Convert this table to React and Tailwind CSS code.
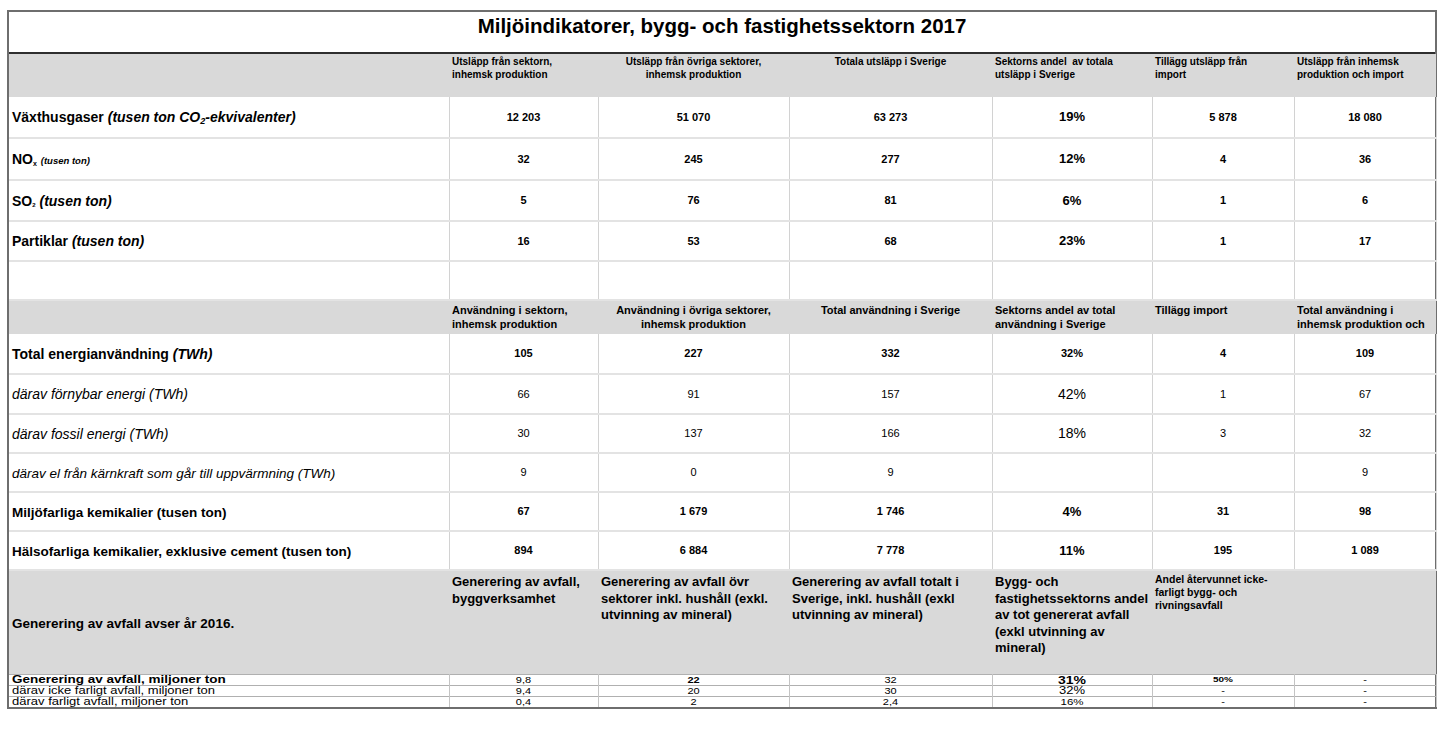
import React from 'react';

const ARIAL = { fontFamily: '"Liberation Sans", Arial, sans-serif' };

const widths = [440, 149, 191, 203, 160, 142, 142];

const Label = ({ children, h, className = "" }) => (
  <td className={`border-r border-[#d2d2d2] border-b-2 border-b-[#e3e3e3] pl-[3px] align-middle whitespace-nowrap ${className}`} style={{ height: h }}>
    {children}
  </td>
);

const Val = ({ children, className = "" }) => (
  <td className={`border-r border-[#d2d2d2] border-b-2 border-b-[#e3e3e3] text-center align-middle ${className}`}>
    {children}
  </td>
);

const Head = ({ children, center, className = "" }) => (
  <td className={`align-top px-[3px] whitespace-nowrap ${center ? 'text-center' : 'text-left'} ${className}`}>
    {children}
  </td>
);

const emis = [
  {
    label: <><b className="text-[14px]">Växthusgaser </b><b className="italic text-[14px]">(tusen ton CO<sub className="text-[9px]">2</sub>-ekvivalenter)</b></>,
    vals: ['12 203', '51 070', '63 273', '19%', '5 878', '18 080'], h: 41,
  },
  {
    label: <><b className="text-[14px]">NO<sub className="text-[7px]">x</sub> </b><b className="italic text-[9.5px]">(tusen ton)</b></>,
    vals: ['32', '245', '277', '12%', '4', '36'], h: 42,
  },
  {
    label: <><b className="text-[14px]">SO<sub className="text-[6px]">2</sub> </b><b className="italic text-[14px]">(tusen ton)</b></>,
    vals: ['5', '76', '81', '6%', '1', '6'], h: 41,
  },
  {
    label: <><b className="text-[14px]">Partiklar </b><b className="italic text-[14px]">(tusen ton)</b></>,
    vals: ['16', '53', '68', '23%', '1', '17'], h: 40,
  },
];

const energy = [
  { label: <span className="font-bold text-[14px]">Total energianvändning <i>(TWh)</i></span>, vals: ['105', '227', '332', '32%', '4', '109'], bold: true, h: 40 },
  { label: <span className="italic text-[14px]">därav förnybar energi (TWh)</span>, vals: ['66', '91', '157', '42%', '1', '67'], h: 40 },
  { label: <span className="italic text-[14px]">därav fossil energi (TWh)</span>, vals: ['30', '137', '166', '18%', '3', '32'], h: 39 },
  { label: <span className="italic text-[13.5px]">därav el från kärnkraft som går till uppvärmning (TWh)</span>, vals: ['9', '0', '9', '', '', '9'], h: 39 },
];

const chem = [
  { label: 'Miljöfarliga kemikalier (tusen ton)', vals: ['67', '1 679', '1 746', '4%', '31', '98'], h: 39 },
  { label: 'Hälsofarliga kemikalier, exklusive cement (tusen ton)', vals: ['894', '6 884', '7 778', '11%', '195', '1 089'], h: 39 },
];

const waste = [
  { label: 'Generering av avfall, miljoner ton', vals: ['9,8', '22', '32', '31%', '50%', '-'], bold: true },
  { label: 'därav icke farligt avfall,  miljoner ton', vals: ['9,4', '20', '30', '32%', '-', '-'] },
  { label: 'därav farligt avfall,  miljoner ton', vals: ['0,4', '2', '2,4', '16%', '-', '-'] },
];

const wasteCls = (r, j) => {
  if (j === 3) return r.bold ? 'font-bold text-[14px]' : r.label.startsWith('därav icke') ? 'text-[13px]' : 'text-[11.5px]';
  if (j === 4 && r.bold) return 'font-bold text-[10px]';
  if (j === 1 && r.bold) return 'font-bold text-[11px]';
  return 'text-[11px]';
};

export default function App() {
  return (
    <div className="bg-white w-[1442px] h-[739px] pt-[10px] pl-[7px]" style={ARIAL}>
      <div className="w-[1430px] border-2 border-[#6e6e6e] text-black">
        <div className="h-[42px] flex items-start justify-center border-b-2 border-b-[#2e2e2e]">
          <h1 className="font-bold text-[20.5px] leading-[26px] mt-[1px]">Miljöindikatorer, bygg- och fastighetssektorn 2017</h1>
        </div>
        <table className="table-fixed border-collapse w-[1426px]">
          <colgroup>
            {widths.map((w, i) => <col key={i} style={{ width: w }} />)}
          </colgroup>
          <tbody>
            <tr className="bg-[#d9d9d9] h-[43px] font-bold text-[10px] leading-[13px]">
              <td />
              <Head className="pt-[1px]">Utsläpp från sektorn,<br />inhemsk produktion</Head>
              <Head center className="pt-[1px]">Utsläpp från övriga sektorer,<br />inhemsk produktion</Head>
              <Head center className="pt-[1px]">Totala utsläpp i Sverige</Head>
              <Head className="pt-[1px]">Sektorns andel&nbsp; av totala<br />utsläpp i Sverige</Head>
              <Head className="pt-[1px]">Tillägg utsläpp från<br />import</Head>
              <Head className="pt-[1px]">Utsläpp från inhemsk<br />produktion och import</Head>
            </tr>
            {emis.map((r, i) => (
              <tr key={i}>
                <Label h={r.h}>{r.label}</Label>
                {r.vals.map((v, j) => (
                  <Val key={j} className={j === 3 ? 'font-bold text-[13px]' : 'font-bold text-[11px]'}>{v}</Val>
                ))}
              </tr>
            ))}
            <tr>
              <Label h={39} />
              {[0, 1, 2, 3, 4, 5].map(j => <Val key={j} />)}
            </tr>
            <tr className="bg-[#d9d9d9] h-[33px] font-bold text-[11px] leading-[14px]">
              <td />
              <Head className="pt-[2px]">Användning i sektorn,<br />inhemsk produktion</Head>
              <Head center className="pt-[2px]">Användning i övriga sektorer,<br />inhemsk produktion</Head>
              <Head center className="pt-[2px]">Total användning i Sverige</Head>
              <Head className="pt-[2px]">Sektorns andel av total<br />användning i Sverige</Head>
              <Head className="pt-[2px]">Tillägg import</Head>
              <td className="align-top pt-[2px] px-[3px]">
                <div className="h-[31px] overflow-hidden whitespace-nowrap">Total användning i<br />inhemsk produktion och<br />import</div>
              </td>
            </tr>
            {energy.map((r, i) => (
              <tr key={i}>
                <Label h={r.h}>{r.label}</Label>
                {r.vals.map((v, j) => (
                  <Val key={j} className={`${r.bold ? 'font-bold' : ''} ${j === 3 && !r.bold ? 'text-[14px]' : 'text-[11px]'}`}>
                    {v}
                  </Val>
                ))}
              </tr>
            ))}
            {chem.map((r, i) => (
              <tr key={i}>
                <Label h={r.h}><b className="text-[13.5px]">{r.label}</b></Label>
                {r.vals.map((v, j) => (
                  <Val key={j} className={j === 3 ? 'font-bold text-[13px]' : 'font-bold text-[11px]'}>{v}</Val>
                ))}
              </tr>
            ))}
            <tr className="bg-[#d9d9d9] h-[104px] font-bold text-[13px] leading-[16.5px]">
              <td className="pl-[3px] align-middle pt-[4px] text-[13.5px]">Generering av avfall avser år 2016.</td>
              <td className="align-top pt-[3px] px-[3px] whitespace-nowrap">Generering av avfall,<br />byggverksamhet</td>
              <td className="align-top pt-[3px] px-[3px] whitespace-nowrap">Generering av avfall övr<br />sektorer inkl. hushåll (exkl.<br />utvinning av mineral)</td>
              <td className="align-top pt-[3px] px-[3px] whitespace-nowrap">Generering av avfall totalt i<br />Sverige, inkl. hushåll (exkl<br />utvinning av mineral)</td>
              <td className="align-top pt-[3px] px-[3px] whitespace-nowrap">Bygg- och<br />fastighetssektorns andel<br />av tot genererat avfall<br />(exkl utvinning av<br />mineral)</td>
              <td className="align-top pt-[2px] px-[3px] leading-[13px] text-[10.5px] whitespace-nowrap">Andel återvunnet icke-<br />farligt bygg- och<br />rivningsavfall</td>
              <td />
            </tr>
            {waste.map((r, i) => (
              <tr key={i}>
                <td className={`h-[11px] p-0 pl-[3px] leading-[10px] whitespace-nowrap border-r border-[#c4c4c4] border-t border-t-[#b0b0b0] ${r.bold ? 'font-bold text-[13.5px]' : 'text-[13px]'}`}>
                  <span className="inline-block scale-y-[0.8] origin-center">{r.label}</span>
                </td>
                {r.vals.map((v, j) => (
                  <td key={j} className={`h-[11px] p-0 leading-[10px] text-center border-r border-[#c4c4c4] border-t border-t-[#b0b0b0] ${wasteCls(r, j)}`}>
                    <span className="inline-block scale-y-[0.8] origin-center">{v}</span>
                  </td>
                ))}
              </tr>
            ))}
          </tbody>
        </table>
      </div>
    </div>
  );
}
